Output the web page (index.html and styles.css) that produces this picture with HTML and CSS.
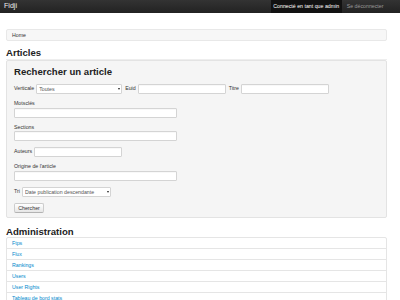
FILE: index.html
```html
<!DOCTYPE html>
<html lang="fr">
<head>
    <meta charset="UTF-8">
    <title>Fidji - Articles</title>
    <link rel="stylesheet" href="styles.css">
</head>
<body>
    <div class="navbar">
        <a class="brand" href="#">Fidji</a>
        <ul class="nav">
            <li class="active"><a href="#">Connecté en tant que admin</a></li>
            <li><a href="#">Se déconnecter</a></li>
        </ul>
    </div>
    <div class="container">
        <ul class="breadcrumb">
            <li><a href="#">Home</a></li>
        </ul>
        <h1 class="page-header">Articles</h1>
        <div class="well">
            <h2>Rechercher un article</h2>
            <form>
                <div class="inline-row">
                    <label for="verticale">Verticale</label>
                    <div class="select-wrap small">
                        <select id="verticale">
                            <option>Toutes</option>
                        </select>
                    </div>
                    <label for="euid">Euid</label>
                    <input type="text" id="euid" class="small">
                    <label for="titre">Titre</label>
                    <input type="text" id="titre" class="small">
                </div>
                <label class="block" for="motscles">Motsclés</label>
                <input type="text" id="motscles" class="xlarge">
                <label class="block" for="sections">Sections</label>
                <input type="text" id="sections" class="xlarge">
                <div class="inline-row">
                    <label for="auteurs">Auteurs</label>
                    <input type="text" id="auteurs" class="small">
                </div>
                <label class="block" for="origine">Origine de l'article</label>
                <input type="text" id="origine" class="xlarge">
                <div class="inline-row">
                    <label for="tri">Tri</label>
                    <div class="select-wrap tri">
                        <select id="tri">
                            <option>Date publication descendante</option>
                        </select>
                    </div>
                </div>
                <button type="button" class="btn">Chercher</button>
            </form>
        </div>
        <h1 class="section-title">Administration</h1>
        <ul class="admin-list">
            <li><a href="#">Ftps</a></li>
            <li><a href="#">Flux</a></li>
            <li><a href="#">Rankings</a></li>
            <li><a href="#">Users</a></li>
            <li><a href="#">User Rights</a></li>
            <li><a href="#">Tableau de bord stats</a></li>
        </ul>
    </div>
</body>
</html>
```

FILE: styles.css
```css
html, body {
    overflow: hidden;
}
body {
    margin: 0;
    font-family: "Liberation Sans", Arial, sans-serif;
    font-size: 5.25px;
    line-height: 7.5px;
    color: #333;
    background-color: #fff;
}
a {
    text-decoration: none;
}
ul {
    list-style: none;
    margin: 0;
    padding: 0;
}
.navbar {
    display: flex;
    align-items: stretch;
    height: 13px;
    background: linear-gradient(#333, #222);
    border-bottom: 0 solid #252525;
}
.brand {
    display: block;
    padding-left: 4px;
    font-size: 7.1px;
    line-height: 13px;
    color: #eee;
}
.nav {
    display: flex;
    margin-left: auto;
    margin-right: 14px;
}
.nav li a {
    display: block;
    padding: 0 2.5px;
    line-height: 13px;
    color: #999;
}
.nav li.active a {
    background-color: #111;
    color: #fff;
    margin-right: 2.5px;
}
.container {
    width: 381px;
    margin-left: 6px;
}
.breadcrumb {
    margin-top: 16px;
    height: 12px;
    box-sizing: border-box;
    padding-left: 5px;
    background-color: #f7f7f7;
    border: 1px solid #e8e8e8;
    border-radius: 2px;
    line-height: 10px;
}
.breadcrumb a {
    color: #333;
}
h1, h2 {
    margin: 0;
    font-size: 9.6px;
    font-weight: bold;
    color: #222;
}
.page-header {
    margin-top: 6px;
    line-height: 11px;
    padding-bottom: 1px;
    border-bottom: 1px solid #eee;
}
.well {
    box-sizing: border-box;
    height: 158px;
    padding: 5px 7px 0;
    background-color: #f5f5f5;
    border: 1px solid #e3e3e3;
    border-radius: 2px;
}
.well h2 {
    line-height: 12px;
    margin-bottom: 6px;
}
.inline-row {
    display: flex;
    align-items: center;
    height: 10px;
    margin-bottom: 6px;
}
.inline-row label {
    margin-right: 2px;
}
.inline-row input, .inline-row .select-wrap {
    margin-right: 3px;
}
label.block {
    display: block;
}
input {
    display: block;
    box-sizing: border-box;
    height: 10px;
    margin: 0;
    padding: 0 2px;
    font-family: inherit;
    font-size: 5.25px;
    background-color: #fff;
    border: 1px solid #d4d4d4;
    border-radius: 1px;
    box-shadow: inset 0 0.5px 0.5px rgba(0, 0, 0, 0.06);
}
input.small {
    width: 88px;
}
input.xlarge {
    width: 163px;
    margin-bottom: 6px;
}
.select-wrap {
    position: relative;
    height: 10px;
}
.select-wrap.small {
    width: 86px;
}
.select-wrap.tri {
    width: 89px;
}
.select-wrap select {
    appearance: none;
    -webkit-appearance: none;
    display: block;
    width: 100%;
    height: 10px;
    box-sizing: border-box;
    margin: 0;
    padding: 0 2px;
    font-family: inherit;
    font-size: 5.25px;
    color: #555;
    background-color: #fff;
    border: 1px solid #d4d4d4;
    border-radius: 1px;
}
.select-wrap::after {
    content: "";
    position: absolute;
    right: 2px;
    top: 4px;
    border-left: 1.5px solid transparent;
    border-right: 1.5px solid transparent;
    border-top: 2px solid #222;
}
.btn {
    display: block;
    box-sizing: border-box;
    height: 10px;
    width: 30px;
    padding: 0;
    font-family: inherit;
    font-size: 5.25px;
    color: #333;
    background: linear-gradient(#fff, #e6e6e6);
    border: 1px solid #ccc;
    border-bottom-color: #b3b3b3;
    border-radius: 2px;
}
.section-title {
    margin-top: 8px;
    line-height: 11px;
}
.admin-list {
    background-color: #fff;
    border: 1px solid #e5e5e5;
    border-radius: 2px;
}
.admin-list li {
    height: 11px;
    box-sizing: border-box;
    padding-left: 5px;
    line-height: 10px;
    border-top: 1px solid #e5e5e5;
}
.admin-list li:first-child {
    border-top: 0;
    height: 10px;
}
.admin-list a {
    color: #08c;
}
```
